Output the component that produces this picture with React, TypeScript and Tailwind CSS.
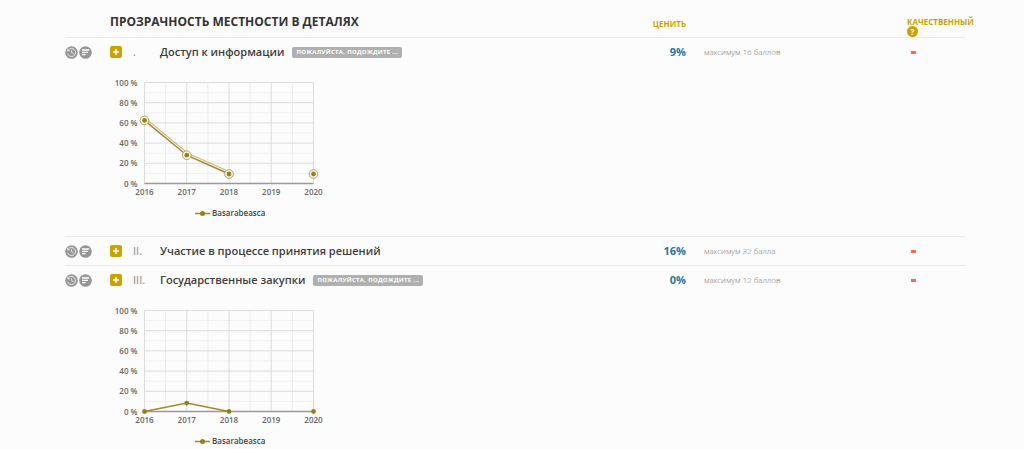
import { useState } from 'react';

interface Point {
  year: number;
  value: number | null;
}

interface Section {
  id: number;
  numeral: string;
  title: string;
  percent: number;
  max: string;
  loading?: boolean;
  highlighted?: boolean;
  history?: Point[];
}

const SECTIONS: Section[] = [
  {
    id: 1,
    numeral: '.',
    title: 'Доступ к информации',
    percent: 9,
    max: 'максимум 16 баллов',
    loading: true,
    highlighted: true,
    history: [
      { year: 2016, value: 62.5 },
      { year: 2017, value: 28 },
      { year: 2018, value: 9.4 },
      { year: 2019, value: null },
      { year: 2020, value: 9.4 },
    ],
  },
  { id: 2, numeral: 'II.', title: 'Участие в процессе принятия решений', percent: 16, max: 'максимум 32 балла' },
  {
    id: 3,
    numeral: 'III.',
    title: 'Государственные закупки',
    percent: 0,
    max: 'максимум 12 баллов',
    loading: true,
    history: [
      { year: 2016, value: 0 },
      { year: 2017, value: 8.3 },
      { year: 2018, value: 0 },
      { year: 2019, value: null },
      { year: 2020, value: 0 },
    ],
  },
];

// plot area inside the chart drawing
const LEFT = 34.5;
const TOP = 16.5;
const WIDTH = 169;
const HEIGHT = 101;

function HistoryIcon() {
  return (
    <svg viewBox="0 0 13 13" className="w-[13px] h-[13px]" fill="none" stroke="#fff">
      <circle cx="6.5" cy="6.5" r="6.3" fill="#969696" stroke="none" />
      <path d="M3.2 4.2A4 4 0 1 1 2.7 7.8" strokeWidth="0.8" />
      <path d="M2.6 2.7v2.1h2.1" strokeWidth="0.8" />
      <path d="M6.6 4.4v2.3l1.7 0.9" strokeWidth="0.8" />
    </svg>
  );
}

function NotesIcon() {
  return (
    <svg viewBox="0 0 13 13" className="w-[13px] h-[13px]" fill="none" stroke="#fff">
      <circle cx="6.5" cy="6.5" r="6.3" fill="#969696" stroke="none" />
      <path d="M3 4h7.2M3 6.3h6M3 8.6h3.6" strokeWidth="1.3" />
    </svg>
  );
}

function HistoryChart({ points, highlighted }: { points: Point[]; highlighted?: boolean }) {
  const x = (i: number) => LEFT + (i * WIDTH) / (points.length - 1);
  const y = (v: number) => TOP + HEIGHT - (v * HEIGHT) / 100;

  let path = '';
  points.forEach((p, i) => {
    if (p.value === null) return;
    const joined = i > 0 && points[i - 1].value !== null;
    path += `${joined ? 'L' : 'M'}${x(i)} ${y(p.value)}`;
  });

  return (
    <svg
      width="220"
      height="170"
      className="block text-[8px] font-semibold"
      fill="#666"
      role="img"
      aria-label="Basarabeasca"
    >
      {[10, 30, 50, 70, 90].map(v => (
        <line key={v} x1={LEFT} x2={LEFT + WIDTH} y1={y(v)} y2={y(v)} stroke="#f0f0f0" />
      ))}
      {points.slice(1).map((p, i) => (
        <line key={p.year} x1={x(i + 0.5)} x2={x(i + 0.5)} y1={TOP} y2={TOP + HEIGHT} stroke="#ececec" />
      ))}
      {[0, 20, 40, 60, 80, 100].map(v => (
        <g key={v}>
          <line x1={LEFT} x2={LEFT + WIDTH} y1={y(v)} y2={y(v)} stroke="#dcdcdc" />
          <text x={LEFT - 7} y={y(v) + 3} textAnchor="end">{v} %</text>
        </g>
      ))}
      {points.map((p, i) => (
        <g key={p.year}>
          <line x1={x(i)} x2={x(i)} y1={TOP} y2={TOP + HEIGHT} stroke="#dcdcdc" />
          <text x={x(i)} y={TOP + HEIGHT + 11} textAnchor="middle">{p.year}</text>
        </g>
      ))}
      <line x1={LEFT} x2={LEFT + WIDTH} y1={y(0)} y2={y(0)} stroke="#999" strokeWidth="1.5" />

      {highlighted && <path d={path} transform="translate(1 -2)" fill="none" stroke="#c9bb7c" strokeWidth="1.2" />}
      <path d={path} fill="none" stroke="#a18a2c" strokeWidth="1.5" />
      {points.map((p, i) => p.value !== null && (
        <g key={p.year}>
          {highlighted && <circle cx={x(i)} cy={y(p.value)} r="4.3" fill="#fcfcfc" stroke="#b5a352" />}
          <circle cx={x(i)} cy={y(p.value)} r="2.4" fill="#96801c" />
        </g>
      ))}

      <line x1="85" x2="100" y1="147.5" y2="147.5" stroke="#a18a2c" strokeWidth="1.5" />
      <circle cx="92.5" cy="147.5" r="2.5" fill="#96801c" />
      <text x="102" y="150" fill="#444">Basarabeasca</text>
    </svg>
  );
}

function SectionRows({ section }: { section: Section }) {
  const [open, setOpen] = useState(!!section.history);

  return (
    <tbody>
      <tr className="h-[29px] [&>td]:border-t [&>td]:border-[#ebebeb]">
        <td>
          <div className="flex gap-px">
            <button type="button" aria-label="История"><HistoryIcon /></button>
            <button type="button" aria-label="Заметки"><NotesIcon /></button>
          </div>
        </td>
        <td>
          <button
            type="button"
            aria-label={section.title}
            aria-expanded={open}
            onClick={() => setOpen(!open)}
            className="flex items-center justify-center w-3 h-3 rounded-xs bg-[#c9a300]"
          >
            <svg viewBox="0 0 6 6" className="w-[6px] h-[6px]" stroke="#fff" strokeWidth="1.4">
              <path d="M3 0v6M0 3h6" />
            </svg>
          </button>
        </td>
        <td className="text-[11px] text-[#888]">{section.numeral}</td>
        <td>
          <div className="flex items-center gap-2">
            <span className="text-[11px] font-semibold text-[#3c3c3c]">{section.title}</span>
            {section.loading && (
              <span className="px-1 rounded-xs bg-[#b0b0b0] text-[6px] leading-[11px] font-bold tracking-wider uppercase text-white">
                Пожалуйста, подождите ...
              </span>
            )}
          </div>
        </td>
        <td className="text-right text-[11px] font-bold text-[#2279a8]">{section.percent}%</td>
        <td className="pl-[18px] text-[8px] font-light text-[#777]">{section.max}</td>
        <td className="pl-1">
          <div className="w-[5px] h-[3px] bg-[#fb6a50]" />
        </td>
      </tr>
      {open && section.history && (
        <tr>
          <td />
          <td colSpan={6}>
            <HistoryChart points={section.history} highlighted={section.highlighted} />
          </td>
        </tr>
      )}
    </tbody>
  );
}

export default function App() {
  return (
    <div className="min-h-screen bg-[#fcfcfc] pl-[65px] pr-[59px] font-['Open_Sans','Noto_Sans',sans-serif]">
      <table className="w-full table-fixed border-separate border-spacing-0 whitespace-nowrap">
        <colgroup>
          <col className="w-[45px]" />
          <col className="w-[23px]" />
          <col className="w-[27px]" />
          <col />
          <col className="w-[60px]" />
          <col className="w-[221px]" />
          <col className="w-[58px]" />
        </colgroup>
        <thead>
          <tr className="h-[37px] text-left uppercase">
            <th />
            <th colSpan={3} className="pt-1.5 text-[12px] font-bold text-[#333]">Прозрачность местности в деталях</th>
            <th className="pt-2.5 text-right text-[8px] font-bold text-[#c9a300]">Ценить</th>
            <th />
            <th className="pt-4 text-[8px] leading-[9px] font-bold text-[#c9a300]">
              Качественный
              <button
                type="button"
                aria-label="Помощь"
                className="flex items-center justify-center w-[11px] h-[11px] rounded-full bg-[#c9a300] text-white"
              >
                ?
              </button>
            </th>
          </tr>
        </thead>
        {SECTIONS.map(s => <SectionRows key={s.id} section={s} />)}
      </table>
    </div>
  );
}
